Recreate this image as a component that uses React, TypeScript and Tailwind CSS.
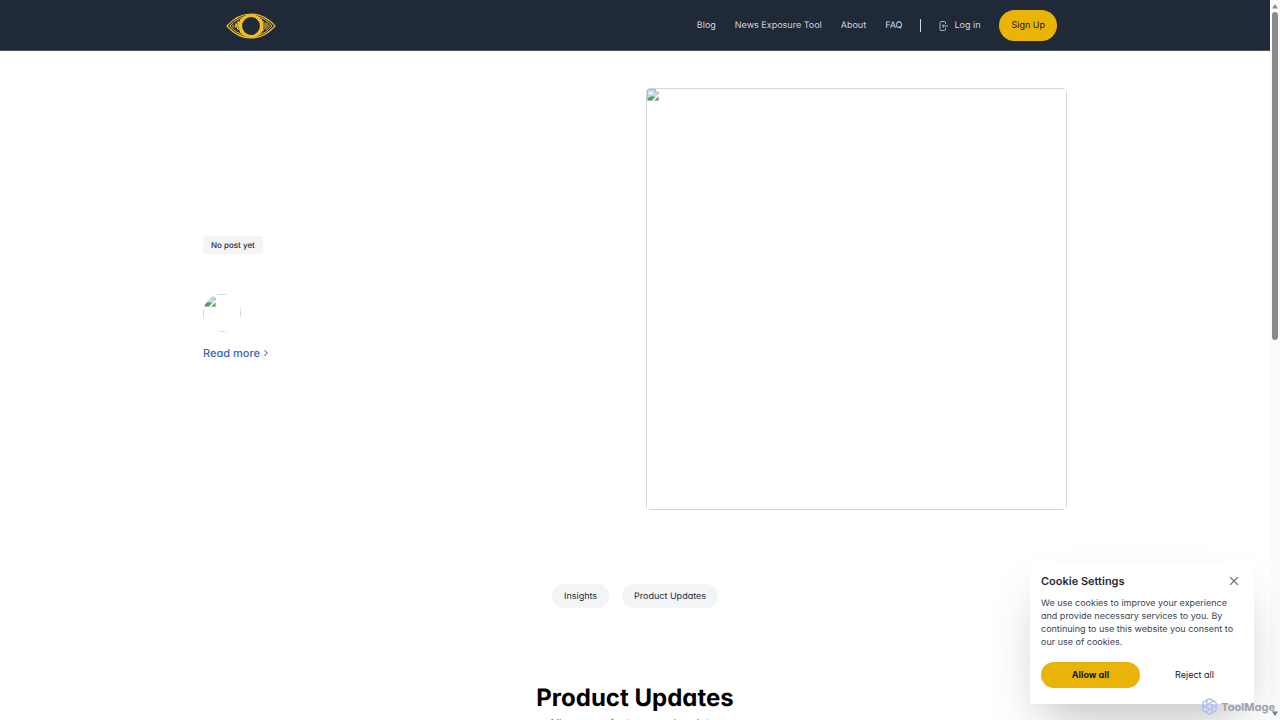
import { ChevronRight, X } from 'lucide-react';

const NAV_LINKS = ['Blog', 'News Exposure Tool', 'About', 'FAQ'];
const CATEGORIES = ['Insights', 'Product Updates'];

function EyeLogo() {
  return (
    <svg width="50" height="26" viewBox="0 0 50 26" fill="none" stroke="#f0bd27" aria-label="Home">
      <path d="M1 13C8 5 16 1 25 1s17 4 24 12c-7 8-15 12-24 12S8 21 1 13Z" strokeWidth="1.2" />
      <path d="M4 13c4-5 9-8 15-9.500M4 13c4 5 9 8 15 9.500M46 13c-4-5-9-8-15-9.500M46 13c-4 5-9 8-15 9.500" strokeWidth="1" />
      <path d="M7 11.500v3M9 15l1-5 2 7V8l3 10M15 6c-2.500 5-2.500 9 0 14M18 4.500c-4 5-4 12 0 17M43 11.500v3M41 9.500v7M39 9.500v7M37 8v10M35 6c2.500 5 2.500 9 0 14M32 4.500c4 5 4 12 0 17" strokeWidth="1.1" />
      <circle cx="25" cy="13" r="10.500" fill="#1f2937" stroke="#f0bd27" strokeWidth="3.200" />
    </svg>
  );
}

function LoginIcon() {
  return (
    <svg width="10" height="10" viewBox="0 0 10 10" fill="none" stroke="currentColor" strokeWidth="0.8" aria-hidden="true">
      <path d="M6.500 3V1.500a1 1 0 0 0-1-1H2a1 1 0 0 0-1 1v7a1 1 0 0 0 1 1h3.500a1 1 0 0 0 1-1V7M9 5H3.500M5 3.300 3.300 5 5 6.700" />
    </svg>
  );
}

function BrokenImageIcon() {
  return (
    <svg width="12" height="12" viewBox="0 0 12 12" aria-hidden="true">
      <path d="M0.500 0.500h8l3 3v8h-11Z" fill="#c6d7f2" stroke="#b3b6ba" />
      <path d="M2 5a1.500 1.500 0 0 1 2.500-1.500A1.300 1.300 0 0 1 6 5Z" fill="#fff" />
      <path d="M1 11V9.500C3 7 5 6.500 8 8l-3 3Z" fill="#4fa83d" />
      <path d="M8.500 0.500v3h3" fill="#fff" stroke="#b3b6ba" />
      <path d="M12 5 5 12h1.500L12 7Z" fill="#fff" />
      <path d="M8 11h3V8Z" fill="#4fa83d" />
    </svg>
  );
}

function Header() {
  return (
    <header className="border-b border-[#4b5563] bg-[#1f2937]">
      <div className="mx-auto flex h-[50px] max-w-[864px] items-center justify-between pt-px pl-[23px] pr-[10px]">
        <a href="#"><EyeLogo /></a>
        <nav className="flex items-center text-[9px] leading-[13px] text-gray-300">
          <div className="flex gap-[19px]">
            {NAV_LINKS.map((label) => (
              <a key={label} href="#">{label}</a>
            ))}
          </div>
          <span className="mx-[18px] h-[13px] w-px bg-gray-300" />
          <a href="#" className="flex items-center gap-[5px]">
            <LoginIcon />
            Log in
          </a>
          <a
            href="#"
            className="ml-[19px] flex h-[31px] items-center rounded-full bg-[#eab308] px-3 text-gray-900"
          >
            Sign Up
          </a>
        </nav>
      </div>
    </header>
  );
}

function Hero() {
  return (
    <section className="mx-auto grid max-w-[864px] grid-cols-2 items-center gap-[21px] pt-[37px]">
      <div className="flex flex-col items-start">
        <span className="rounded bg-[#f3f4f6] px-2 py-[3px] text-[8px] leading-3 font-medium text-[#1f2937]">
          No post yet
        </span>
        <div className="mt-10 h-[38px] w-[38px] overflow-hidden rounded-full">
          <div className="h-full border border-gray-300">
            <BrokenImageIcon />
          </div>
        </div>
        <a href="#" className="mt-[13px] flex items-center gap-px text-[11px] leading-4 font-medium text-[#3b63bb]">
          Read more
          <ChevronRight size={10} strokeWidth={2.5} />
        </a>
      </div>
      <div className="aspect-square overflow-hidden rounded-[5px]">
        <div className="h-full border border-gray-300">
          <BrokenImageIcon />
        </div>
      </div>
    </section>
  );
}

function CookieDialog() {
  return (
    <section
      aria-labelledby="cookie-title"
      className="absolute right-[26px] bottom-4 w-[224px] bg-white px-[11px] pt-[11px] pb-4 shadow-2xl"
    >
      <div className="flex items-center justify-between">
        <h2 id="cookie-title" className="text-[11px] leading-4 font-semibold text-[#1f2937]">
          Cookie Settings
        </h2>
        <button type="button" aria-label="Close" className="mr-[2px] text-gray-500">
          <X size={14} />
        </button>
      </div>
      <p className="mt-2 text-[9px] leading-[13px] text-[#374151]">
        We use cookies to improve your experience and provide necessary services to you. By
        continuing to use this website you consent to our use of cookies.
      </p>
      <div className="mt-[13px] flex gap-[6px] text-[9px] text-gray-900">
        <button type="button" className="h-[26px] w-[99px] rounded-full bg-[#eab308] font-bold">
          Allow all
        </button>
        <button type="button" className="h-[26px] flex-1 rounded-full">Reject all</button>
      </div>
    </section>
  );
}

function Watermark() {
  return (
    <div className="absolute right-[5px] bottom-[5px] flex items-center gap-[3px] text-gray-400">
      <svg width="17" height="17" viewBox="0 0 24 24" fill="none" stroke="#a9c0f2" strokeWidth="2" aria-hidden="true">
        {[0, 60, 120, 180, 240, 300].map((angle) => (
          <path key={angle} d="M8 7.500V5.500a4 4 0 0 1 6-3.500l5 3M9 9.500l5-3" transform={`rotate(${angle} 12 12)`} />
        ))}
      </svg>
      <span className="text-[11px] leading-4 font-bold">ToolMage</span>
    </div>
  );
}

function Scrollbar() {
  return (
    <div className="flex w-[10px] flex-col items-center bg-[#fcfcfc] py-1" aria-hidden="true">
      <svg width="8" height="5" viewBox="0 0 8 5" fill="#8b8b8b"><path d="M4 0l3 4.500H1Z" /></svg>
      <div className="mt-[3px] h-[328px] w-[6px] rounded-full bg-[#8b8b8b]" />
      <svg className="mt-auto" width="8" height="5" viewBox="0 0 8 5" fill="#7b7b7b"><path d="M4 5 1 .5h6Z" /></svg>
    </div>
  );
}

export default function App() {
  return (
    <div className="relative flex h-screen overflow-hidden bg-white font-['Inter',sans-serif] [font-feature-settings:'cv11'] [text-rendering:geometricPrecision]">
      <div className="min-w-0 flex-1">
        <Header />
        <main>
          <Hero />
          <div className="mt-[74px] flex justify-center gap-[13px]">
            {CATEGORIES.map((category) => (
              <a
                key={category}
                href="#"
                className="rounded-full bg-[#f3f4f6] px-3 pt-[5px] pb-[3px] text-[9px] leading-4 text-[#1f2937]"
              >
                {category}
              </a>
            ))}
          </div>
          <section className="mt-[74px] text-center">
            <h2 className="text-[24px] leading-8 font-bold text-black">Product Updates</h2>
            <p className="mt-px text-[11px] leading-4 text-gray-500">All our new features and updates</p>
          </section>
        </main>
      </div>
      <Scrollbar />
      <CookieDialog />
      <Watermark />
    </div>
  );
}
